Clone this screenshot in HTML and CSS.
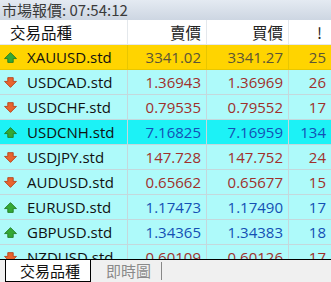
FILE: index.html
```html
<!DOCTYPE html>
<html>
<head>
    <title>市場報價</title>
    <link rel="stylesheet" href="styles.css">
</head>
<body>

<div class="quotes-window">
    <div class="title-bar">市場報價: 07:54:12</div>

    <div class="quotes-table">
        <div class="quote-row header">
            <div class="cell symbol">交易品種</div>
            <div class="cell num">賣價</div>
            <div class="cell num">買價</div>
            <div class="cell num">!</div>
        </div>

        <div class="quote-row gold">
            <div class="cell symbol"><svg class="arrow" viewBox="0 0 12 12"><path d="M6 1.5 L11.5 7 L8.5 7 L8.5 10.5 L3.5 10.5 L3.5 7 L0.5 7 Z" fill="#35a835" stroke="#1f7a1f" stroke-width="0.8"/></svg>XAUUSD.std</div>
            <div class="cell num">3341.02</div>
            <div class="cell num">3341.27</div>
            <div class="cell num">25</div>
        </div>

        <div class="quote-row down">
            <div class="cell symbol"><svg class="arrow" viewBox="0 0 12 12"><path d="M6 10.5 L11.5 5 L8.5 5 L8.5 1.5 L3.5 1.5 L3.5 5 L0.5 5 Z" fill="#e8642e" stroke="#b63e16" stroke-width="0.8"/></svg>USDCAD.std</div>
            <div class="cell num">1.36943</div>
            <div class="cell num">1.36969</div>
            <div class="cell num">26</div>
        </div>

        <div class="quote-row down">
            <div class="cell symbol"><svg class="arrow" viewBox="0 0 12 12"><path d="M6 10.5 L11.5 5 L8.5 5 L8.5 1.5 L3.5 1.5 L3.5 5 L0.5 5 Z" fill="#e8642e" stroke="#b63e16" stroke-width="0.8"/></svg>USDCHF.std</div>
            <div class="cell num">0.79535</div>
            <div class="cell num">0.79552</div>
            <div class="cell num">17</div>
        </div>

        <div class="quote-row up selected">
            <div class="cell symbol"><svg class="arrow" viewBox="0 0 12 12"><path d="M6 1.5 L11.5 7 L8.5 7 L8.5 10.5 L3.5 10.5 L3.5 7 L0.5 7 Z" fill="#35a835" stroke="#1f7a1f" stroke-width="0.8"/></svg>USDCNH.std</div>
            <div class="cell num">7.16825</div>
            <div class="cell num">7.16959</div>
            <div class="cell num">134</div>
        </div>

        <div class="quote-row down">
            <div class="cell symbol"><svg class="arrow" viewBox="0 0 12 12"><path d="M6 10.5 L11.5 5 L8.5 5 L8.5 1.5 L3.5 1.5 L3.5 5 L0.5 5 Z" fill="#e8642e" stroke="#b63e16" stroke-width="0.8"/></svg>USDJPY.std</div>
            <div class="cell num">147.728</div>
            <div class="cell num">147.752</div>
            <div class="cell num">24</div>
        </div>

        <div class="quote-row down">
            <div class="cell symbol"><svg class="arrow" viewBox="0 0 12 12"><path d="M6 10.5 L11.5 5 L8.5 5 L8.5 1.5 L3.5 1.5 L3.5 5 L0.5 5 Z" fill="#e8642e" stroke="#b63e16" stroke-width="0.8"/></svg>AUDUSD.std</div>
            <div class="cell num">0.65662</div>
            <div class="cell num">0.65677</div>
            <div class="cell num">15</div>
        </div>

        <div class="quote-row up">
            <div class="cell symbol"><svg class="arrow" viewBox="0 0 12 12"><path d="M6 1.5 L11.5 7 L8.5 7 L8.5 10.5 L3.5 10.5 L3.5 7 L0.5 7 Z" fill="#35a835" stroke="#1f7a1f" stroke-width="0.8"/></svg>EURUSD.std</div>
            <div class="cell num">1.17473</div>
            <div class="cell num">1.17490</div>
            <div class="cell num">17</div>
        </div>

        <div class="quote-row up">
            <div class="cell symbol"><svg class="arrow" viewBox="0 0 12 12"><path d="M6 1.5 L11.5 7 L8.5 7 L8.5 10.5 L3.5 10.5 L3.5 7 L0.5 7 Z" fill="#35a835" stroke="#1f7a1f" stroke-width="0.8"/></svg>GBPUSD.std</div>
            <div class="cell num">1.34365</div>
            <div class="cell num">1.34383</div>
            <div class="cell num">18</div>
        </div>

        <div class="quote-row down">
            <div class="cell symbol"><svg class="arrow" viewBox="0 0 12 12"><path d="M6 10.5 L11.5 5 L8.5 5 L8.5 1.5 L3.5 1.5 L3.5 5 L0.5 5 Z" fill="#e8642e" stroke="#b63e16" stroke-width="0.8"/></svg>NZDUSD.std</div>
            <div class="cell num">0.60109</div>
            <div class="cell num">0.60126</div>
            <div class="cell num">17</div>
        </div>
    </div>

    <div class="tab-bar">
        <div class="tab active">交易品種</div>
        <div class="tab">即時圖</div>
    </div>
</div>

</body>
</html>
```

FILE: styles.css
```css
* { margin: 0; padding: 0; box-sizing: border-box; }
body {
    font-family: "Open Sans", "Noto Sans CJK TC", sans-serif;
    width: 331px;
    height: 282px;
    overflow: hidden;
    background: #f0f0f0;
}

.quotes-window {
    height: 282px;
    display: flex;
    flex-direction: column;
}

/* Title strip */
.title-bar {
    height: 20px;
    flex: none;
    padding-left: 2px;
    font-family: "Noto Sans CJK TC", sans-serif;
    font-size: 15px;
    line-height: 19px;
    color: #3a3a3a;
    background: linear-gradient(#e4eaf2, #cdd6e2);
    white-space: nowrap;
}

.quotes-table {
    height: 239px;
    flex: none;
    overflow: hidden;
    background: #fff;
}

.quote-row {
    display: grid;
    grid-template-columns: 128px 79px 82px 42px;
    height: 25px;
    font-size: 15px;
    line-height: 24px;
    background: #aefafa;
}

.quote-row .cell {
    border-right: 1px solid #c4d8dc;
    border-bottom: 1px solid #c4d8dc;
    white-space: nowrap;
    overflow: hidden;
}

.quote-row .cell:last-child {
    border-right: none;
}

.cell.symbol {
    display: flex;
    align-items: center;
    gap: 10px;
    padding-left: 4px;
    color: #111;
}

.cell.num {
    text-align: right;
    padding-right: 5px;
}

.arrow {
    width: 13px;
    height: 13px;
    flex: none;
}

.quote-row.header {
    background: #fff;
    color: #222;
    font-family: "Noto Sans CJK TC", sans-serif;
    font-size: 15.5px;
}

.quote-row.header .cell {
    border-color: #e4e8ec;
}

.quote-row.header .symbol {
    padding-left: 10px;
}

.quote-row.header .cell:last-child {
    padding-right: 9px;
}

.quote-row.gold {
    background: #ffd400;
}

.quote-row.gold .cell {
    border-color: #e8c600;
}

.quote-row.gold .num {
    color: #5c5536;
}

.quote-row.down .num {
    color: #a0302c;
}

.quote-row.up .num {
    color: #1450b4;
}

.quote-row.selected {
    background: #1cf2f6;
}

/* Bottom tabs */
.tab-bar {
    height: 23px;
    flex: none;
    display: flex;
    align-items: flex-start;
    border-top: 1px solid #000;
    background: #f0f0f0;
    padding-left: 5px;
    font-family: "Noto Sans CJK TC", sans-serif;
}

.tab {
    font-size: 15px;
    line-height: 18px;
    padding: 0 10px 0 15px;
    margin-top: 2px;
    color: #8a8a8a;
    border-right: 1px solid #888;
}

.tab.active {
    color: #111;
    background: #fff;
    border: 1px solid #000;
    border-top: none;
    margin-top: 0;
    height: 22px;
    line-height: 21px;
    width: 86px;
    padding: 0 0 0 14px;
}
```
